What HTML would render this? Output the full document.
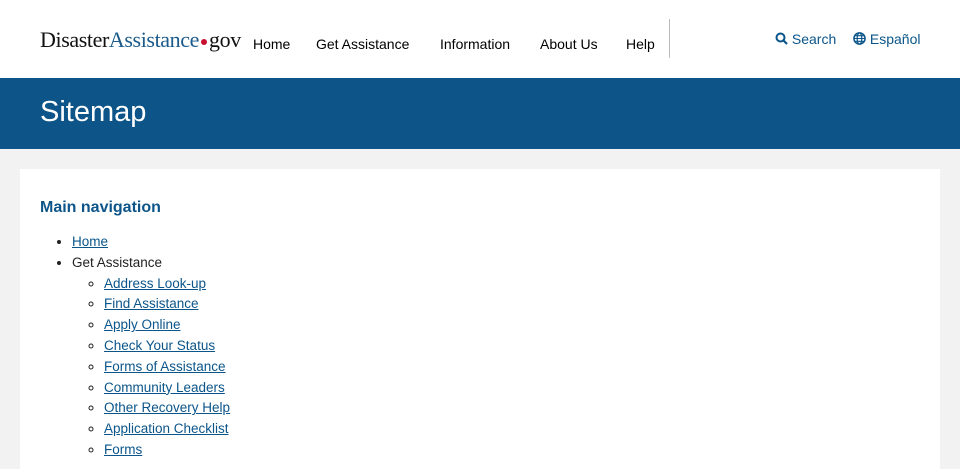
<!DOCTYPE html>
<html><head><meta charset="utf-8"><style>
body{margin:0;width:960px;height:460px;overflow:hidden;background:#f2f2f2;font-family:"Liberation Sans",sans-serif;}
.hdr{position:absolute;top:0;left:0;width:960px;height:78px;background:#fff;}
.logo{position:absolute;left:40px;top:27px;font-family:"Liberation Serif",serif;font-size:22px;letter-spacing:-0.4px;color:#111;white-space:nowrap}
.logo .b{color:#1b5a8a}
.logo .dot{display:inline-block;width:6px;height:6px;border-radius:50%;background:#c8102e;margin:0 2px 2px 2px}
.nav{position:absolute;top:36px;font-size:14px;color:#000}
.sep{position:absolute;left:669px;top:19px;width:1px;height:39px;background:#bbb}
.rt{position:absolute;top:31px;font-size:14px;color:#0b558a}
.ban{position:absolute;top:78px;left:0;width:960px;height:71px;background:#0d5589}
.ban h1{margin:0;position:absolute;left:40px;top:18px;color:#fff;font-weight:normal;font-size:29px}
.main{position:absolute;left:20px;top:169px;width:920px;height:300px;background:#fff}
h2{position:absolute;left:20px;top:30px;margin:0;font-size:16px;color:#0d5589}
ul{margin:0;padding:0}
.l1{position:absolute;left:52px;top:63px;font-size:13.5px;color:#222;list-style:disc}
.l1 li{line-height:20.8px}
.l2{padding-left:32px;list-style:circle}
a{color:#0b558a;text-decoration:underline}
</style></head><body>
<div class="hdr">
<div class="logo">Disaster<span class="b">Assistance</span><span class="dot"></span>gov</div>
<div class="nav" style="left:253px">Home</div>
<div class="nav" style="left:316px">Get Assistance</div>
<div class="nav" style="left:440px">Information</div>
<div class="nav" style="left:540px">About Us</div>
<div class="nav" style="left:626px">Help</div>
<div class="sep"></div>
<div class="rt" style="left:775px"><svg width="13" height="13" viewBox="0 0 13 13" style="vertical-align:-1px"><circle cx="5.5" cy="5.5" r="4" fill="none" stroke="#0b558a" stroke-width="2"/><path d="M8.5 8.5L12 12" stroke="#0b558a" stroke-width="2.2"/></svg> Search</div>
<div class="rt" style="left:853px"><svg width="13" height="13" viewBox="0 0 14 14" style="vertical-align:-1px"><circle cx="7" cy="7" r="6" fill="none" stroke="#0b558a" stroke-width="1.6"/><ellipse cx="7" cy="7" rx="2.5" ry="6" fill="none" stroke="#0b558a" stroke-width="1.3"/><path d="M1 7h12M2 4h10M2 10h10" stroke="#0b558a" stroke-width="1.2"/></svg> Español</div>
</div>
<div class="ban"><h1>Sitemap</h1></div>
<div class="main">
<h2>Main navigation</h2>
<ul class="l1">
<li><a>Home</a></li>
<li>Get Assistance
<ul class="l2">
<li><a>Address Look-up</a></li>
<li><a>Find Assistance</a></li>
<li><a>Apply Online</a></li>
<li><a>Check Your Status</a></li>
<li><a>Forms of Assistance</a></li>
<li><a>Community Leaders</a></li>
<li><a>Other Recovery Help</a></li>
<li><a>Application Checklist</a></li>
<li><a>Forms</a></li>
</ul></li>
</ul>
</div>
</body></html>
